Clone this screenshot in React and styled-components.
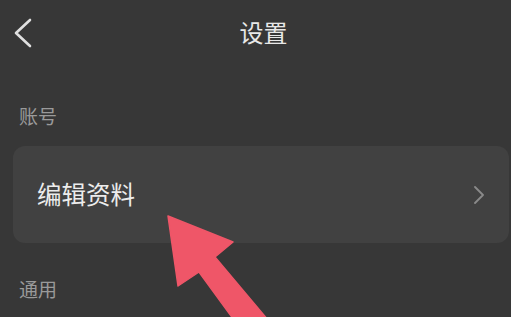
import styled, { createGlobalStyle } from "styled-components";

const GlobalStyle = createGlobalStyle`
  html, body {
    margin: 0;
    padding: 0;
    background: #373737;
  }
  body {
    font-family: "Noto Sans CJK SC", "Noto Sans", sans-serif;
  }
`;

const Page = styled.div`
  position: relative;
  width: 511px;
  height: 317px;
  overflow: hidden;
  background: #373737;
`;

const Header = styled.div`
  height: 68px;
  display: flex;
  align-items: center;
  justify-content: center;
  position: relative;
`;

const BackButton = styled.svg`
  position: absolute;
  left: 14px;
  top: 18px;
  width: 20px;
  height: 30px;
`;

const Title = styled.div`
  font-size: 24px;
  color: #e8e8e8;
  margin: -6px 0 0 16px;
`;

const SectionLabel = styled.div`
  font-size: 19px;
  color: #9a9a9a;
  box-sizing: border-box;
  padding: ${props => props.top || 0}px 0 0 19px;
  height: ${props => props.height}px;
  display: flex;
  align-items: center;
`;

const Card = styled.div`
  margin: 0 2px 0 13px;
  height: 97px;
  background: #414141;
  border-radius: 12px;
  display: flex;
  align-items: center;
  justify-content: space-between;
  padding: 0 24px 0 24px;
`;

const RowText = styled.div`
  font-size: 24.5px;
  color: #ececec;
  margin-top: -2px;
`;

const Chevron = styled.svg`
  width: 12px;
  height: 18px;
`;

const Arrow = styled.svg`
  position: absolute;
  left: 0;
  top: 0;
  pointer-events: none;
`;

function App() {
  return (
    <Page>
      <GlobalStyle />
      <Header>
        <BackButton viewBox="0 0 20 30">
          <polyline points="16,2 2,15 16,28" fill="none" stroke="#e0e0e0" strokeWidth="2.6" strokeLinecap="round" strokeLinejoin="round" />
        </BackButton>
        <Title>设置</Title>
      </Header>
      <SectionLabel height={78} top={16}>账号</SectionLabel>
      <Card>
        <RowText>编辑资料</RowText>
        <Chevron viewBox="0 0 12 18">
          <polyline points="2,1 10,9 2,17" fill="none" stroke="#8a8a8a" strokeWidth="1.8" strokeLinecap="round" strokeLinejoin="round" />
        </Chevron>
      </Card>
      <SectionLabel height={90}>通用</SectionLabel>
      <Arrow width="511" height="317" viewBox="0 0 511 317">
        <polygon
          points="168,216 233,242 215,257 268,320 234,320 199,272 178,286"
          fill="#ef5668"
          stroke="#ef5668"
          strokeWidth="1.5"
          strokeLinejoin="round"
        />
      </Arrow>
    </Page>
  );
}

export default App;
